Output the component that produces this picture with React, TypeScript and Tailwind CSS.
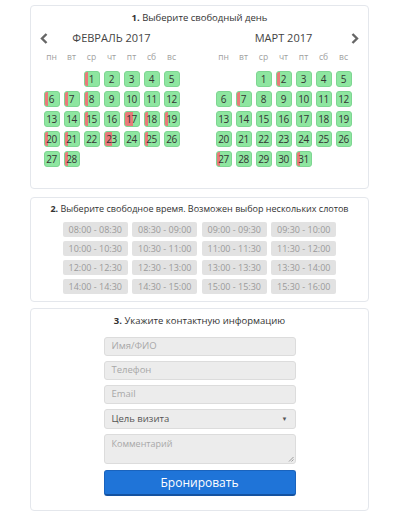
import React from "react";

type Cell = { d: number; red?: number };

const feb: (Cell | null)[] = [
  null, null,
  { d: 1, red: 3 }, { d: 2 }, { d: 3 }, { d: 4 }, { d: 5 },
  { d: 6, red: 3 }, { d: 7, red: 3 }, { d: 8, red: 3 }, { d: 9 }, { d: 10 }, { d: 11 }, { d: 12 },
  { d: 13 }, { d: 14 }, { d: 15, red: 3 }, { d: 16 }, { d: 17, red: 8 }, { d: 18, red: 3 }, { d: 19, red: 3 },
  { d: 20, red: 3 }, { d: 21, red: 3 }, { d: 22 }, { d: 23, red: 7 }, { d: 24 }, { d: 25, red: 3 }, { d: 26 },
  { d: 27 }, { d: 28, red: 3 },
];

const mar: (Cell | null)[] = [
  null, null,
  { d: 1 }, { d: 2, red: 3 }, { d: 3 }, { d: 4 }, { d: 5 },
  { d: 6 }, { d: 7, red: 3 }, { d: 8 }, { d: 9 }, { d: 10 }, { d: 11 }, { d: 12 },
  { d: 13 }, { d: 14 }, { d: 15 }, { d: 16 }, { d: 17 }, { d: 18 }, { d: 19 },
  { d: 20 }, { d: 21 }, { d: 22 }, { d: 23 }, { d: 24 }, { d: 25 }, { d: 26 },
  { d: 27, red: 3 }, { d: 28 }, { d: 29 }, { d: 30 }, { d: 31, red: 3 },
];

const dayNames = ["пн", "вт", "ср", "чт", "пт", "сб", "вс"];

const slots = [
  "08:00 - 08:30", "08:30 - 09:00", "09:00 - 09:30", "09:30 - 10:00",
  "10:00 - 10:30", "10:30 - 11:00", "11:00 - 11:30", "11:30 - 12:00",
  "12:00 - 12:30", "12:30 - 13:00", "13:00 - 13:30", "13:30 - 14:00",
  "14:00 - 14:30", "14:30 - 15:00", "15:00 - 15:30", "15:30 - 16:00",
];

function Month({ title, cells }: { title: string; cells: (Cell | null)[] }) {
  return (
    <div className="w-[136px] flex flex-col">
      <div className="h-[14px] flex items-center justify-center text-[11px] text-[#444]">
        {title}
      </div>
      <div className="grid grid-cols-[repeat(7,16px)] gap-x-[4px] mt-[7px] h-[10px]">
        {dayNames.map((n) => (
          <div key={n} className="text-[8.5px] leading-[10px] text-[#a0a0a0] text-center">
            {n}
          </div>
        ))}
      </div>
      <div className="grid grid-cols-[repeat(7,16px)] gap-x-[4px] gap-y-[4px] mt-[9px]">
        {cells.map((c, i) =>
          c ? (
            <div
              key={i}
              className="relative h-[16px] rounded-[3px] bg-[#8ee6a0] border border-[#7ed692] overflow-hidden flex items-center justify-center"
            >
              {c.red ? (
                <div
                  className="absolute left-0 top-0 bottom-0 bg-[#e97a7a]"
                  style={{ width: c.red }}
                />
              ) : null}
              <span className="relative text-[10px] leading-none text-[#333] tracking-[-0.4px]">{c.d}</span>
            </div>
          ) : (
            <div key={i} className="h-[16px]" />
          )
        )}
      </div>
    </div>
  );
}

function Chevron({ dir }: { dir: "left" | "right" }) {
  return (
    <svg width="8" height="11" viewBox="0 0 8 11">
      <path
        d={dir === "left" ? "M6.5 1 L2 5.5 L6.5 10" : "M1.5 1 L6 5.5 L1.5 10"}
        fill="none"
        stroke="#666"
        strokeWidth="2.4"
      />
    </svg>
  );
}

export default function App() {
  const font = { fontFamily: '"Open Sans", "Noto Sans", sans-serif' };
  return (
    <div className="w-[400px] h-[517px] bg-white flex flex-col pt-[5px] pl-[30px]" style={font}>
      {/* Panel 1 */}
      <div className="relative w-[339px] h-[184px] border border-[#e4e7ec] rounded-[4px] flex flex-col items-center pt-[5px]">
        <div className="h-[14px] text-[9.5px] leading-[14px] text-[#333] whitespace-nowrap">
          <b>1.</b> Выберите свободный день
        </div>
        <div className="absolute left-[9px] top-[27px]">
          <Chevron dir="left" />
        </div>
        <div className="absolute right-[9px] top-[27px]">
          <Chevron dir="right" />
        </div>
        <div className="flex gap-[36px] mt-[6px] ml-[-4px]">
          <Month title="ФЕВРАЛЬ 2017" cells={feb} />
          <Month title="МАРТ 2017" cells={mar} />
        </div>
      </div>

      {/* Panel 2 */}
      <div className="w-[339px] h-[105px] mt-[8px] border border-[#e4e7ec] rounded-[4px] flex flex-col items-center pt-[4px]">
        <div className="h-[14px] text-[9px] leading-[14px] text-[#333] whitespace-nowrap">
          <b>2.</b> Выберите свободное время. Возможен выбор нескольких слотов
        </div>
        <div className="grid grid-cols-[repeat(4,65px)] gap-x-[4.5px] gap-y-[4px] mt-[6px]">
          {slots.map((s) => (
            <div
              key={s}
              className="h-[15px] bg-[#e2e2e2] rounded-[2px] flex items-center justify-center text-[9px] text-[#9a9a9a]"
            >
              {s}
            </div>
          ))}
        </div>
      </div>

      {/* Panel 3 */}
      <div className="w-[339px] h-[203px] mt-[6px] border border-[#e4e7ec] rounded-[4px] flex flex-col items-center pt-[5px]">
        <div className="h-[14px] text-[9.5px] leading-[14px] text-[#333] whitespace-nowrap">
          <b>3.</b> Укажите контактную информацию
        </div>
        <div className="w-[192px] flex flex-col gap-[5px] mt-[9px]">
          {["Имя/ФИО", "Телефон", "Email"].map((p) => (
            <div
              key={p}
              className="h-[19px] bg-[#ececec] border border-[#dcdcdc] rounded-[3px] flex items-center px-[7px] text-[9.5px] text-[#a8a8a8]"
            >
              {p}
            </div>
          ))}
          <div className="h-[20px] bg-[#ececec] border border-[#dcdcdc] rounded-[3px] flex items-center justify-between px-[7px] text-[9.5px] text-[#555]">
            <span>Цель визита</span>
            <span className="text-[6px] text-[#555]">▼</span>
          </div>
          <div className="relative h-[30px] bg-[#ececec] border border-[#dcdcdc] rounded-[3px] px-[7px] pt-[2px] text-[9px] text-[#a8a8a8]">
            Комментарий
            <svg className="absolute right-[1px] bottom-[1px]" width="6" height="6" viewBox="0 0 6 6">
              <path d="M5.5 1 L1 5.5 M5.5 3.5 L3.5 5.5" stroke="#888" strokeWidth="0.8" />
            </svg>
          </div>
          <div className="h-[26px] mt-[1px] bg-[#1f74d8] border border-[#1a63bd] border-b-[2px] border-b-[#1452a0] rounded-[3px] flex items-center justify-center text-[12px] text-white">
            Бронировать
          </div>
        </div>
      </div>
    </div>
  );
}
